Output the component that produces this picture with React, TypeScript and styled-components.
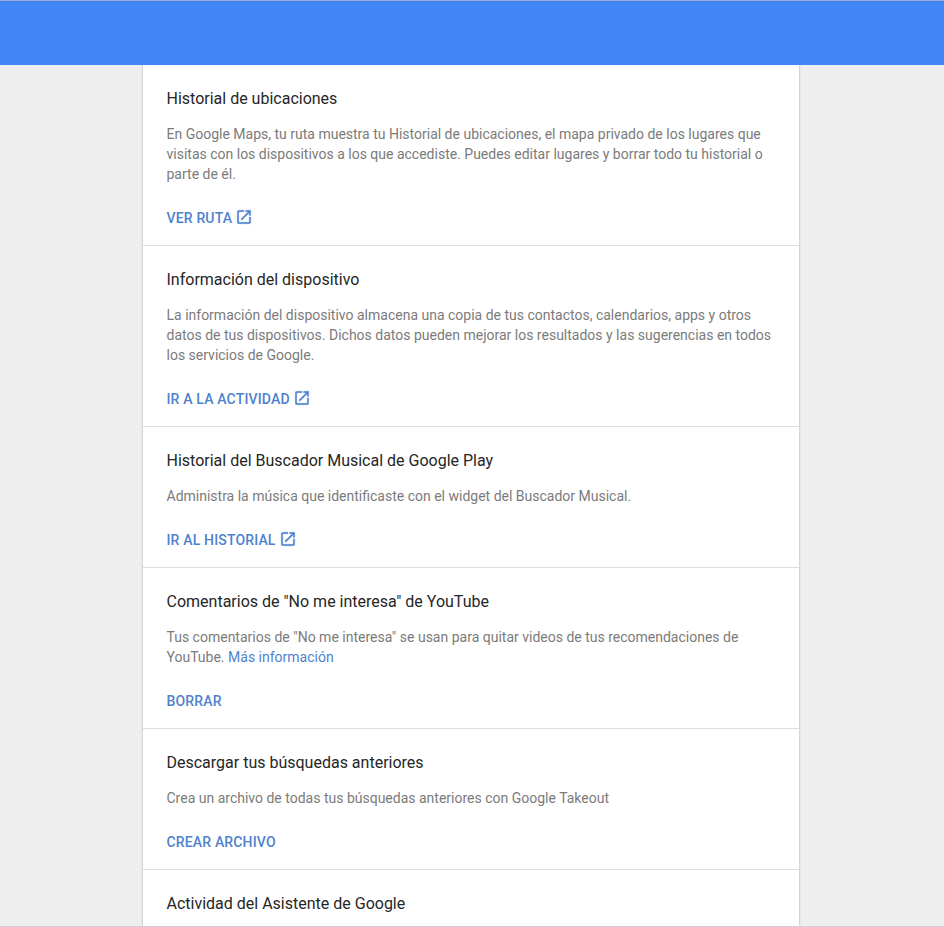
import React from 'react';
import styled, { createGlobalStyle } from 'styled-components';

const GlobalStyle = createGlobalStyle`
  * { box-sizing: border-box; }
  body { margin: 0; background: #eee; font-family: Roboto, sans-serif; overflow: hidden; }
`;

const Page = styled.div`
  height: 927px;
  display: flex;
  flex-direction: column;
  align-items: center;
  overflow: hidden;
  border-bottom: 1px solid #cfcfcf;
`;

const TopBar = styled.header`
  width: 100%;
  height: 65px;
  flex: none;
  background: #4286f7;
  border-top: 1px solid #8fb0e8;
  box-shadow: inset 0 1px 0 #4c80dc;
`;

const Column = styled.main`
  width: 656px;
  flex: 1;
  min-height: 0;
  margin-right: 2px;
  background: #fff;
  box-shadow: 0 0 2px rgba(0, 0, 0, 0.32);
  clip-path: inset(0 -4px 0 -4px);
`;

const Card = styled.section`
  padding: 24px 24px 17px 23.5px;
  border-bottom: 1px solid #dedede;
`;

const Title = styled.h2`
  margin: 0 0 15px;
  font-size: 16px;
  line-height: 20px;
  font-weight: 400;
  color: #262626;
  white-space: nowrap;
`;

const Description = styled.p`
  margin: 0 0 24px;
  font-size: 14px;
  line-height: 20px;
  color: #7b7b7b;
  white-space: nowrap;
`;

const Line = styled.span`
  display: block;
`;

const InlineLink = styled.a`
  color: #4e82cd;
`;

const Action = styled.a`
  display: flex;
  align-items: center;
  gap: 3px;
  height: 20px;
  font-size: 14px;
  line-height: 20px;
  font-weight: 500;
  letter-spacing: 0.16px;
  color: #4e82cd;
  white-space: nowrap;
`;

const LaunchIcon = styled.svg`
  width: 18px;
  height: 18px;
  margin-top: -2px;
  fill: currentColor;
  stroke: currentColor;
  stroke-width: 0.4;
`;

type Item = { title: string; lines?: React.ReactNode[]; action?: string; external?: boolean };

const items: Item[] = [
  {
    title: 'Historial de ubicaciones',
    lines: [
      'En Google Maps, tu ruta muestra tu Historial de ubicaciones, el mapa privado de los lugares que',
      'visitas con los dispositivos a los que accediste. Puedes editar lugares y borrar todo tu historial o',
      'parte de él.',
    ],
    action: 'VER RUTA',
    external: true,
  },
  {
    title: 'Información del dispositivo',
    lines: [
      'La información del dispositivo almacena una copia de tus contactos, calendarios, apps y otros',
      'datos de tus dispositivos. Dichos datos pueden mejorar los resultados y las sugerencias en todos',
      'los servicios de Google.',
    ],
    action: 'IR A LA ACTIVIDAD',
    external: true,
  },
  {
    title: 'Historial del Buscador Musical de Google Play',
    lines: ['Administra la música que identificaste con el widget del Buscador Musical.'],
    action: 'IR AL HISTORIAL',
    external: true,
  },
  {
    title: 'Comentarios de "No me interesa" de YouTube',
    lines: [
      'Tus comentarios de "No me interesa" se usan para quitar videos de tus recomendaciones de',
      <>YouTube. <InlineLink>Más información</InlineLink></>,
    ],
    action: 'BORRAR',
  },
  {
    title: 'Descargar tus búsquedas anteriores',
    lines: ['Crea un archivo de todas tus búsquedas anteriores con Google Takeout'],
    action: 'CREAR ARCHIVO',
  },
  { title: 'Actividad del Asistente de Google' },
];

export default function App() {
  return (
    <Page>
      <GlobalStyle />
      <TopBar />
      <Column>
        {items.map((item) => (
          <Card key={item.title}>
            <Title>{item.title}</Title>
            {item.lines && (
              <Description>
                {item.lines.map((line, i) => <Line key={i}>{line}</Line>)}
              </Description>
            )}
            {item.action && (
              <Action>
                {item.action}
                {item.external && (
                  <LaunchIcon viewBox="0 0 24 24">
                    <path d="M19 19H5V5h7V3H5a2 2 0 0 0-2 2v14a2 2 0 0 0 2 2h14c1.1 0 2-.9 2-2v-7h-2v7zM14 3v2h3.59l-9.83 9.83 1.41 1.41L19 6.41V10h2V3h-7z" />
                  </LaunchIcon>
                )}
              </Action>
            )}
          </Card>
        ))}
      </Column>
    </Page>
  );
}
